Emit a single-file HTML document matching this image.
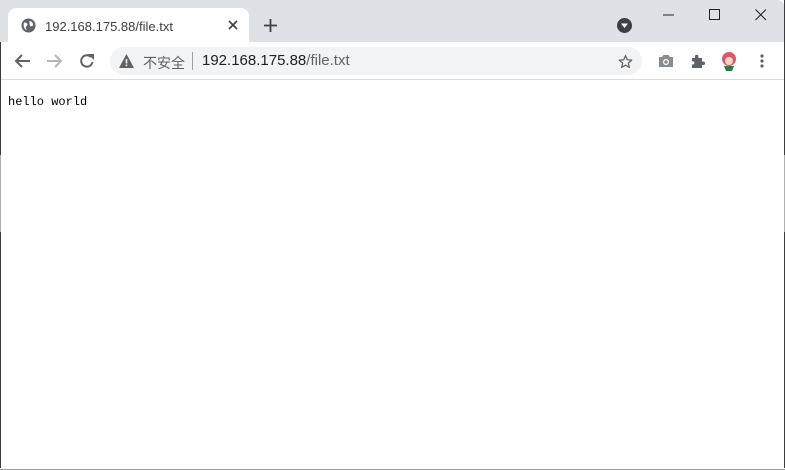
<!DOCTYPE html>
<html><head><meta charset="utf-8"><style>
*{margin:0;padding:0;box-sizing:border-box}
body{width:785px;height:470px;overflow:hidden;background:#fff;font-family:"Liberation Sans","Noto Sans CJK SC",sans-serif;position:relative}
.top{position:absolute;left:0;top:0;width:785px;height:42px;background:#dee1e6;border-top-right-radius:8px}
.tab{position:absolute;left:8px;top:8px;width:241px;height:34px;background:#fff;border-radius:8px 8px 0 0}
.tb{position:absolute;left:0;top:42px;width:785px;height:38px;background:#fff;border-bottom:1px solid #dadce0}
.omni{position:absolute;left:110px;top:47px;width:532px;height:28px;background:#f1f3f4;border-radius:14px}
.t{position:absolute;white-space:nowrap}
.edge{position:absolute;width:1px;background:#3c3c3c}
</style></head><body>
<div class="top"></div>
<div class="tab"></div>
<svg class="t" style="left:21px;top:18px" width="15" height="15" viewBox="0 0 16 16"><circle cx="8" cy="8" r="7.5" fill="#5f6368"/><path d="M3 5 Q6 4 7 7 L5 10 L6 13 Q2 11 3 5Z M9 3 Q13 4 13 8 L10 9 L9 6Z" fill="#fff"/></svg>
<div class="t" style="left:45px;top:19px;font-size:13px;color:#3c4043">192.168.175.88/file.txt</div>
<svg class="t" style="left:228px;top:20px" width="10" height="10"><path d="M1 1L9 9M9 1L1 9" stroke="#3c4043" stroke-width="1.6"/></svg>
<svg class="t" style="left:264px;top:19px" width="13" height="13"><path d="M6.5 0V13M0 6.5H13" stroke="#3c4043" stroke-width="1.8"/></svg>
<svg class="t" style="left:617px;top:18px" width="15" height="15"><circle cx="7.5" cy="7.5" r="7.5" fill="#3c4043"/><path d="M4 5.5H11L7.5 10Z" fill="#fff"/></svg>
<svg class="t" style="left:663px;top:9px" width="12" height="12"><path d="M0 6H11" stroke="#222" stroke-width="1"/></svg>
<svg class="t" style="left:709px;top:9px" width="12" height="12"><rect x="0.5" y="0.5" width="10" height="10" fill="none" stroke="#222"/></svg>
<svg class="t" style="left:755px;top:9px" width="12" height="12"><path d="M0.5 0.5L11 11M11 0.5L0.5 11" stroke="#222"/></svg>
<div class="tb"></div>
<svg class="t" style="left:14px;top:53px" width="17" height="16"><path d="M16 8H2M8 2L2 8L8 14" fill="none" stroke="#5f6368" stroke-width="2"/></svg>
<svg class="t" style="left:46px;top:53px" width="17" height="16"><path d="M1 8H15M9 2L15 8L9 14" fill="none" stroke="#b3b6b9" stroke-width="2"/></svg>
<svg class="t" style="left:79px;top:53px" width="16" height="16"><path d="M13.5 9A5.7 5.7 0 1 1 12 4" fill="none" stroke="#5f6368" stroke-width="2"/><path d="M9 1H15V7Z" fill="#5f6368"/></svg>
<div class="omni"></div>
<svg class="t" style="left:119px;top:54px" width="15" height="14"><path d="M7.5 0L15 14H0Z" fill="#5f6368"/><rect x="6.7" y="5" width="1.6" height="4.5" fill="#f1f3f4"/><rect x="6.7" y="10.5" width="1.6" height="1.6" fill="#f1f3f4"/></svg>
<div class="t" style="left:143px;top:53px;font-size:14px;color:#5f6368">不安全</div>
<div class="t" style="left:192px;top:52px;width:1px;height:18px;background:#9aa0a6"></div>
<div class="t" style="left:202px;top:52px;font-size:15px;color:#202124">192.168.175.88<span style="color:#5f6368">/file.txt</span></div>
<svg class="t" style="left:618px;top:54px" width="15" height="15" viewBox="0 0 24 24"><path d="M12 2.5L14.8 9.2L22 9.8L16.5 14.5L18.2 21.5L12 17.8L5.8 21.5L7.5 14.5L2 9.8L9.2 9.2Z" fill="none" stroke="#5f6368" stroke-width="2" stroke-linejoin="round"/></svg>
<svg class="t" style="left:658px;top:54px" width="16" height="14"><path d="M1 3H4L5.5 1H10.5L12 3H15V13H1Z" fill="#8a8d90"/><circle cx="8" cy="8" r="3" fill="#fff"/><circle cx="8" cy="8" r="1.8" fill="#8a8d90"/></svg>
<svg class="t" style="left:690px;top:53px" width="16" height="16"><path d="M2 5H5V3.5A1.7 1.7 0 0 1 8.4 3.5V5H12V8.5H13.3A1.7 1.7 0 0 1 13.3 12H12V15H2V11.5H3.3A1.7 1.7 0 0 0 3.3 8.3H2Z" fill="#5f6368"/></svg>
<svg class="t" style="left:719px;top:50px" width="20" height="22"><circle cx="10" cy="9" r="7" fill="#d85a6a"/><circle cx="10" cy="11" r="4" fill="#f5d6c6"/><path d="M5 16H15L13 21H7Z" fill="#2d7a3a"/></svg>
<svg class="t" style="left:760px;top:54px" width="4" height="14"><circle cx="2" cy="2" r="1.6" fill="#5f6368"/><circle cx="2" cy="7" r="1.6" fill="#5f6368"/><circle cx="2" cy="12" r="1.6" fill="#5f6368"/></svg>
<div class="t" style="left:8px;top:95px;font-family:'Liberation Mono','Noto Sans CJK SC',monospace;font-size:12px;color:#000">hello world</div>
<div class="edge" style="left:0;top:42px;height:113px"></div>
<div class="edge" style="left:0;top:155px;height:77px;background:#b0b0b0"></div>
<div class="edge" style="left:0;top:232px;height:236px"></div>
<div class="edge" style="left:784px;top:0;height:155px"></div>
<div class="edge" style="left:784px;top:155px;height:77px;background:#b0b0b0"></div>
<div class="edge" style="left:784px;top:232px;height:236px"></div>
<div class="t" style="left:0;top:469px;width:785px;height:1px;background:#9a9a9a"></div>
</body></html>
